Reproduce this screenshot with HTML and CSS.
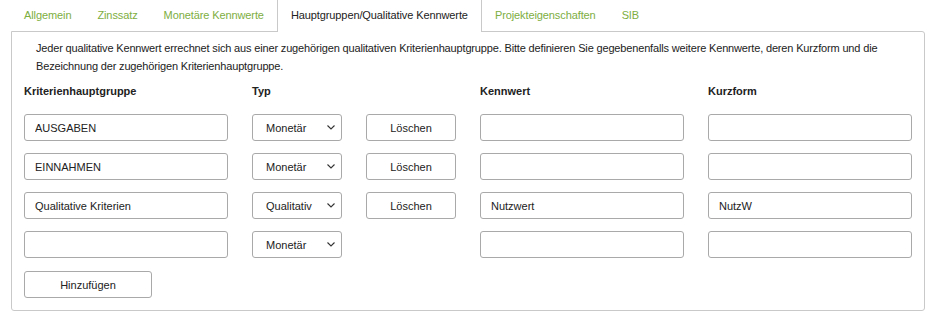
FILE: index.html
```html
<!DOCTYPE html>
<html lang="de">
<head>
  <meta charset="UTF-8">
  <title>Hauptgruppen/Qualitative Kennwerte</title>
  <link rel="stylesheet" href="styles.css">
</head>
<body>
  <ul class="tabs">
    <li class="tab">Allgemein</li>
    <li class="tab">Zinssatz</li>
    <li class="tab">Monetäre Kennwerte</li>
    <li class="tab active">Hauptgruppen/Qualitative Kennwerte</li>
    <li class="tab">Projekteigenschaften</li>
    <li class="tab">SIB</li>
  </ul>

  <div class="panel">
    <p class="intro">Jeder qualitative Kennwert errechnet sich aus einer zugehörigen qualitativen Kriterienhauptgruppe. Bitte definieren Sie gegebenenfalls weitere Kennwerte, deren Kurzform und die Bezeichnung der zugehörigen Kriterienhauptgruppe.</p>

    <div class="form-grid">
      <div class="col-head">Kriterienhauptgruppe</div>
      <div class="col-head">Typ</div>
      <div class="col-head"></div>
      <div class="col-head">Kennwert</div>
      <div class="col-head">Kurzform</div>

      <input class="field" type="text" value="AUSGABEN">
      <div class="select-wrap">
        <select class="select"><option>Monetär</option><option>Qualitativ</option></select>
        <svg class="chevron" width="8" height="5" viewBox="0 0 8 5"><path d="M0.5 0.5 L4 4 L7.5 0.5" fill="none" stroke="#333" stroke-width="1.1"/></svg>
      </div>
      <button class="btn">Löschen</button>
      <input class="field" type="text" value="">
      <input class="field" type="text" value="">

      <input class="field" type="text" value="EINNAHMEN">
      <div class="select-wrap">
        <select class="select"><option>Monetär</option><option>Qualitativ</option></select>
        <svg class="chevron" width="8" height="5" viewBox="0 0 8 5"><path d="M0.5 0.5 L4 4 L7.5 0.5" fill="none" stroke="#333" stroke-width="1.1"/></svg>
      </div>
      <button class="btn">Löschen</button>
      <input class="field" type="text" value="">
      <input class="field" type="text" value="">

      <input class="field" type="text" value="Qualitative Kriterien">
      <div class="select-wrap">
        <select class="select"><option>Qualitativ</option><option>Monetär</option></select>
        <svg class="chevron" width="8" height="5" viewBox="0 0 8 5"><path d="M0.5 0.5 L4 4 L7.5 0.5" fill="none" stroke="#333" stroke-width="1.1"/></svg>
      </div>
      <button class="btn">Löschen</button>
      <input class="field" type="text" value="Nutzwert">
      <input class="field" type="text" value="NutzW">

      <input class="field" type="text" value="">
      <div class="select-wrap">
        <select class="select"><option>Monetär</option><option>Qualitativ</option></select>
        <svg class="chevron" width="8" height="5" viewBox="0 0 8 5"><path d="M0.5 0.5 L4 4 L7.5 0.5" fill="none" stroke="#333" stroke-width="1.1"/></svg>
      </div>
      <div></div>
      <input class="field" type="text" value="">
      <input class="field" type="text" value="">
    </div>

    <button class="btn btn-add">Hinzufügen</button>
  </div>
</body>
</html>
```

FILE: styles.css
```css
:root {
  --text: #222;
  --tab-green: #7dae3f;
  --panel-border: #c9c9c9;
  --field-border: #a9a9a9;
}

body {
  margin: 0;
  padding: 0 7px 0 11px;
  background: #fff;
  font-family: 'Liberation Sans', Arial, sans-serif;
  font-size: 11px;
  color: var(--text);
}

.tabs {
  display: flex;
  margin: 0;
  padding: 0;
  list-style: none;
  height: 31px;
}

.tab {
  padding: 0 13px;
  line-height: 31px;
  color: var(--tab-green);
  white-space: nowrap;
  letter-spacing: -0.1px;
}

.tab.active {
  color: var(--text);
  background: #fff;
  border-left: 1px solid var(--panel-border);
  border-right: 1px solid var(--panel-border);
  height: 32px;
  position: relative;
  z-index: 1;
}

.panel {
  border: 1px solid var(--panel-border);
  border-radius: 0 3px 3px 3px;
  padding: 7px 12px 12px;
  background: #fff;
}

.intro {
  margin: 0;
  padding: 0 12px;
  line-height: 18px;
  letter-spacing: -0.16px;
}

.form-grid {
  display: grid;
  grid-template-columns: 204px 90px 90px 204px 204px;
  column-gap: 24px;
  row-gap: 12px;
  margin-top: 7px;
}

.col-head {
  font-weight: bold;
  line-height: 18px;
  margin-bottom: 2px;
}

.field {
  box-sizing: border-box;
  height: 27px;
  width: 100%;
  margin: 0;
  padding: 0 10px;
  border: 1px solid var(--field-border);
  border-radius: 3px;
  font: inherit;
  color: var(--text);
  background: #fff;
}

.select-wrap {
  position: relative;
}

.select {
  appearance: none;
  box-sizing: border-box;
  width: 100%;
  height: 27px;
  margin: 0;
  padding: 0 0 0 13px;
  border: 1px solid var(--field-border);
  border-radius: 3px;
  font: inherit;
  color: var(--text);
  background: #fff;
}

.chevron {
  position: absolute;
  right: 7px;
  top: 11px;
  pointer-events: none;
}

.btn {
  box-sizing: border-box;
  height: 27px;
  margin: 0;
  padding: 0;
  border: 1px solid var(--field-border);
  border-radius: 3px;
  background: #fff;
  font: inherit;
  color: var(--text);
}

.btn-add {
  display: block;
  width: 128px;
  margin-top: 13px;
}
```
